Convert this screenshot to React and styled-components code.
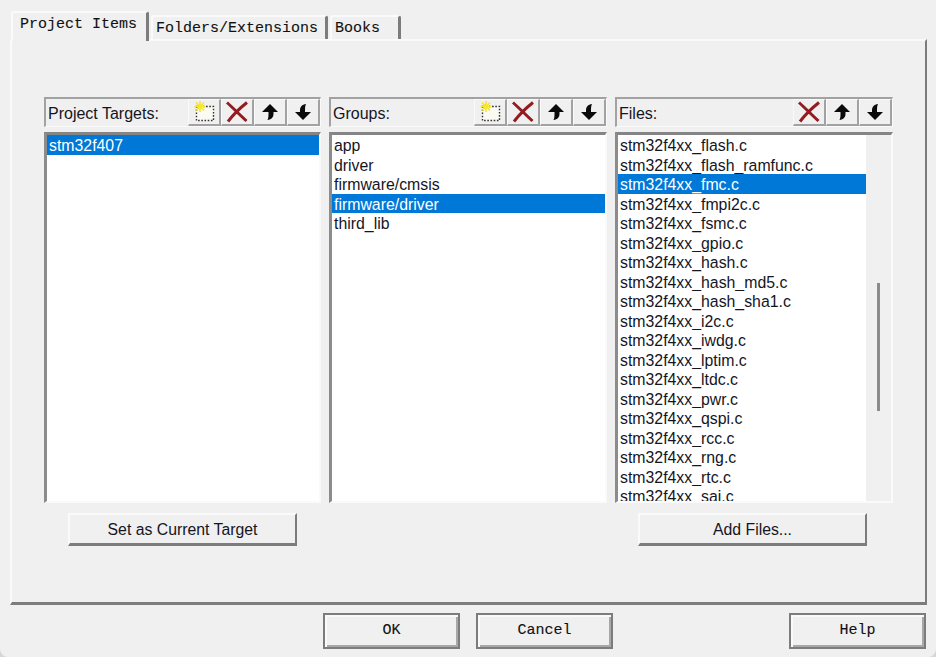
import React from "react";
import styled, { createGlobalStyle } from "styled-components";

const targets = ["stm32f407"];
const groups = ["app", "driver", "firmware/cmsis", "firmware/driver", "third_lib"];
const files = [
  "stm32f4xx_flash.c",
  "stm32f4xx_flash_ramfunc.c",
  "stm32f4xx_fmc.c",
  "stm32f4xx_fmpi2c.c",
  "stm32f4xx_fsmc.c",
  "stm32f4xx_gpio.c",
  "stm32f4xx_hash.c",
  "stm32f4xx_hash_md5.c",
  "stm32f4xx_hash_sha1.c",
  "stm32f4xx_i2c.c",
  "stm32f4xx_iwdg.c",
  "stm32f4xx_lptim.c",
  "stm32f4xx_ltdc.c",
  "stm32f4xx_pwr.c",
  "stm32f4xx_qspi.c",
  "stm32f4xx_rcc.c",
  "stm32f4xx_rng.c",
  "stm32f4xx_rtc.c",
  "stm32f4xx_sai.c",
];

const NewIcon = () => (
  <svg width="24" height="24" viewBox="0 0 24 24">
    <rect x="4.5" y="6.5" width="17" height="14" fill="#fbfbf4" stroke="#333" strokeWidth="1.4" strokeDasharray="1.6 1.6" />
    <path d="M8 1v11M2.5 6.5h11M4 2.5l8 8M12 2.5l-8 8" stroke="#f5e62e" strokeWidth="1.7" />
  </svg>
);

const DeleteIcon = () => (
  <svg width="24" height="22" viewBox="0 0 24 22">
    <path d="M2 1.5 C8 7 15 14 21.5 20 M22 1.5 C15 7 8 14 3 20.5" fill="none" stroke="#931c20" strokeWidth="3" />
  </svg>
);

const UpIcon = () => (
  <svg width="20" height="20" viewBox="0 0 20 20">
    <path d="M10 2 L18 10 H13.5 V12 C13.5 15 11.5 17.5 7.5 18 C8.5 16 8.5 14 8.5 10 H2 Z" fill="#0a0a0a" />
  </svg>
);

const DownIcon = () => (
  <svg width="20" height="20" viewBox="0 0 20 20">
    <path d="M10 18 L18 10 H12 C12 6 12 4 13 2 C9 2.5 7 5 7 8 V10 H2 Z" fill="#0a0a0a" />
  </svg>
);

const Column = ({ title, canAdd, items, selected, scroll }) => (
  <ColumnBox>
    <HeaderBar>
      <HeaderTitle>{title}</HeaderTitle>
      {canAdd && (
        <ToolButton>
          <NewIcon />
        </ToolButton>
      )}
      <ToolButton>
        <DeleteIcon />
      </ToolButton>
      <ToolButton>
        <UpIcon />
      </ToolButton>
      <ToolButton>
        <DownIcon />
      </ToolButton>
    </HeaderBar>
    <ListBox>
      <Rows>
        {items.map((item) => (
          <Row key={item} $selected={item === selected}>
            {item}
          </Row>
        ))}
      </Rows>
      {scroll && (
        <ScrollTrack>
          <ScrollThumb />
        </ScrollTrack>
      )}
    </ListBox>
  </ColumnBox>
);

const App = () => {
  return (
    <Page>
      <GlobalStyle />
      <TabStrip>
        <Tab $active>Project Items</Tab>
        <Tab $width={177}>Folders/Extensions</Tab>
        <Tab $width={71}>Books</Tab>
      </TabStrip>
      <Panel>
        <Columns>
          <Column title="Project Targets:" canAdd items={targets} selected="stm32f407" />
          <Column title="Groups:" canAdd items={groups} selected="firmware/driver" />
          <Column title="Files:" items={files} selected="stm32f4xx_fmc.c" scroll />
        </Columns>
        <ActionRow>
          <ActionButton>Set as Current Target</ActionButton>
          <ActionButton>Add Files...</ActionButton>
        </ActionRow>
      </Panel>
      <Footer>
        <DialogButton>OK</DialogButton>
        <DialogButton>Cancel</DialogButton>
        <HelpButton>Help</HelpButton>
      </Footer>
    </Page>
  );
};

export default App;

const GlobalStyle = createGlobalStyle`
  html, body {
    margin: 0;
    padding: 0;
    background: #d4d6d8;
  }
`;

const Page = styled.div`
  width: 936px;
  height: 657px;
  box-sizing: border-box;
  padding: 11px 0 0 10px;
  display: flex;
  flex-direction: column;
  overflow: hidden;
  background: #f0f0f0;
  border-radius: 0 0 8px 8px;
  font-family: "Liberation Sans", Arial, sans-serif;
  color: #111;
`;

const TabStrip = styled.div`
  display: flex;
  align-items: flex-end;
  height: 28px;
  padding-left: 1px;
  gap: 2px;
  position: relative;
  z-index: 1;
`;

const Tab = styled.div`
  box-sizing: border-box;
  width: ${(p) => (p.$active ? 138 : p.$width)}px;
  height: ${(p) => (p.$active ? 30 : 24)}px;
  margin-bottom: ${(p) => (p.$active ? -2 : 0)}px;
  padding: ${(p) => (p.$active ? "3px 0 0 7px" : "3px 0 0 3px")};
  background: #f0f0f0;
  border-top: 2px solid #fafafa;
  border-left: 2px solid #fafafa;
  border-right: 3px solid #7c7c7c;
  border-radius: 3px 3px 0 0;
  font-family: "Liberation Mono", "DejaVu Sans Mono", monospace;
  font-size: 15px;
  line-height: 18px;
  white-space: nowrap;
  -webkit-text-stroke: 0.12px #111;
`;

const Panel = styled.div`
  width: 917px;
  height: 566px;
  box-sizing: border-box;
  padding: 56px 32px 0 32px;
  border-top: 2px solid #fafafa;
  border-left: 2px solid #fafafa;
  border-right: 2px solid #7c7c7c;
  border-bottom: 3px solid #7c7c7c;
`;

const Columns = styled.div`
  display: grid;
  grid-template-columns: 277px 278px 278px;
  column-gap: 8px;
`;

const ColumnBox = styled.div`
  display: flex;
  flex-direction: column;
  gap: 5px;
  min-width: 0;
`;

const HeaderBar = styled.div`
  height: 30px;
  box-sizing: border-box;
  display: flex;
  align-items: stretch;
  border-top: 2px solid #a2a2a2;
  border-left: 2px solid #a2a2a2;
  border-right: 1px solid #fafafa;
  border-bottom: 1px solid #fafafa;
`;

const HeaderTitle = styled.div`
  flex: 1;
  padding-left: 2px;
  font-size: 16px;
  line-height: 29px;
  color: #15151f;
`;

const ToolButton = styled.div`
  width: 33px;
  box-sizing: border-box;
  display: flex;
  align-items: center;
  justify-content: center;
  background: #f0f0f0;
  border-top: 1px solid #fafafa;
  border-left: 1px solid #fafafa;
  border-right: 2px solid #a2a2a2;
  border-bottom: 2px solid #a2a2a2;
`;

const ListBox = styled.div`
  height: 371px;
  box-sizing: border-box;
  display: flex;
  overflow: hidden;
  background: #fff;
  border-top: 3px solid #858585;
  border-left: 3px solid #8c8c8c;
  border-right: 2px solid #fafafa;
  border-bottom: 2px solid #fafafa;
`;

const Rows = styled.div`
  flex: 1;
  min-width: 0;
`;

const Row = styled.div`
  height: 19.5px;
  padding-left: 2px;
  font-size: 15.85px;
  line-height: 21.5px;
  white-space: nowrap;
  overflow: hidden;
  color: ${(p) => (p.$selected ? "#fff" : "#15151f")};
  background: ${(p) => (p.$selected ? "#0078d7" : "transparent")};
`;

const ScrollTrack = styled.div`
  width: 25px;
  flex-shrink: 0;
  background: #f0f0f0;
  display: flex;
  justify-content: center;
  padding-top: 148px;
  box-sizing: border-box;
`;

const ScrollThumb = styled.div`
  width: 3px;
  height: 128px;
  background: #8b8b8b;
`;

const ActionRow = styled.div`
  display: flex;
  margin-top: 10px;
  padding: 0 26px 0 24px;
  justify-content: space-between;
`;

const ActionButton = styled.div`
  width: 229px;
  height: 33px;
  box-sizing: border-box;
  text-align: center;
  font-size: 15.8px;
  line-height: 29px;
  color: #15151f;
  background: #f0f0f0;
  border-top: 2px solid #fafafa;
  border-left: 2px solid #fafafa;
  border-right: 2px solid #7c7c7c;
  border-bottom: 3px solid #7c7c7c;
`;

const Footer = styled.div`
  display: flex;
  padding: 8px 0 0 313px;
  gap: 16px;
`;

const DialogButton = styled.div`
  width: 137px;
  height: 36px;
  box-sizing: border-box;
  text-align: center;
  font-family: "Liberation Mono", "DejaVu Sans Mono", monospace;
  font-size: 15px;
  line-height: 32px;
  -webkit-text-stroke: 0.12px #111;
  background: #f0f0f0;
  border: 2px solid #7c7c7c;
  box-shadow: inset 2px 2px 0 #fafafa, inset -2px -2px 0 #a8a8a8;
`;

const HelpButton = styled(DialogButton)`
  margin-left: 160px;
`;
